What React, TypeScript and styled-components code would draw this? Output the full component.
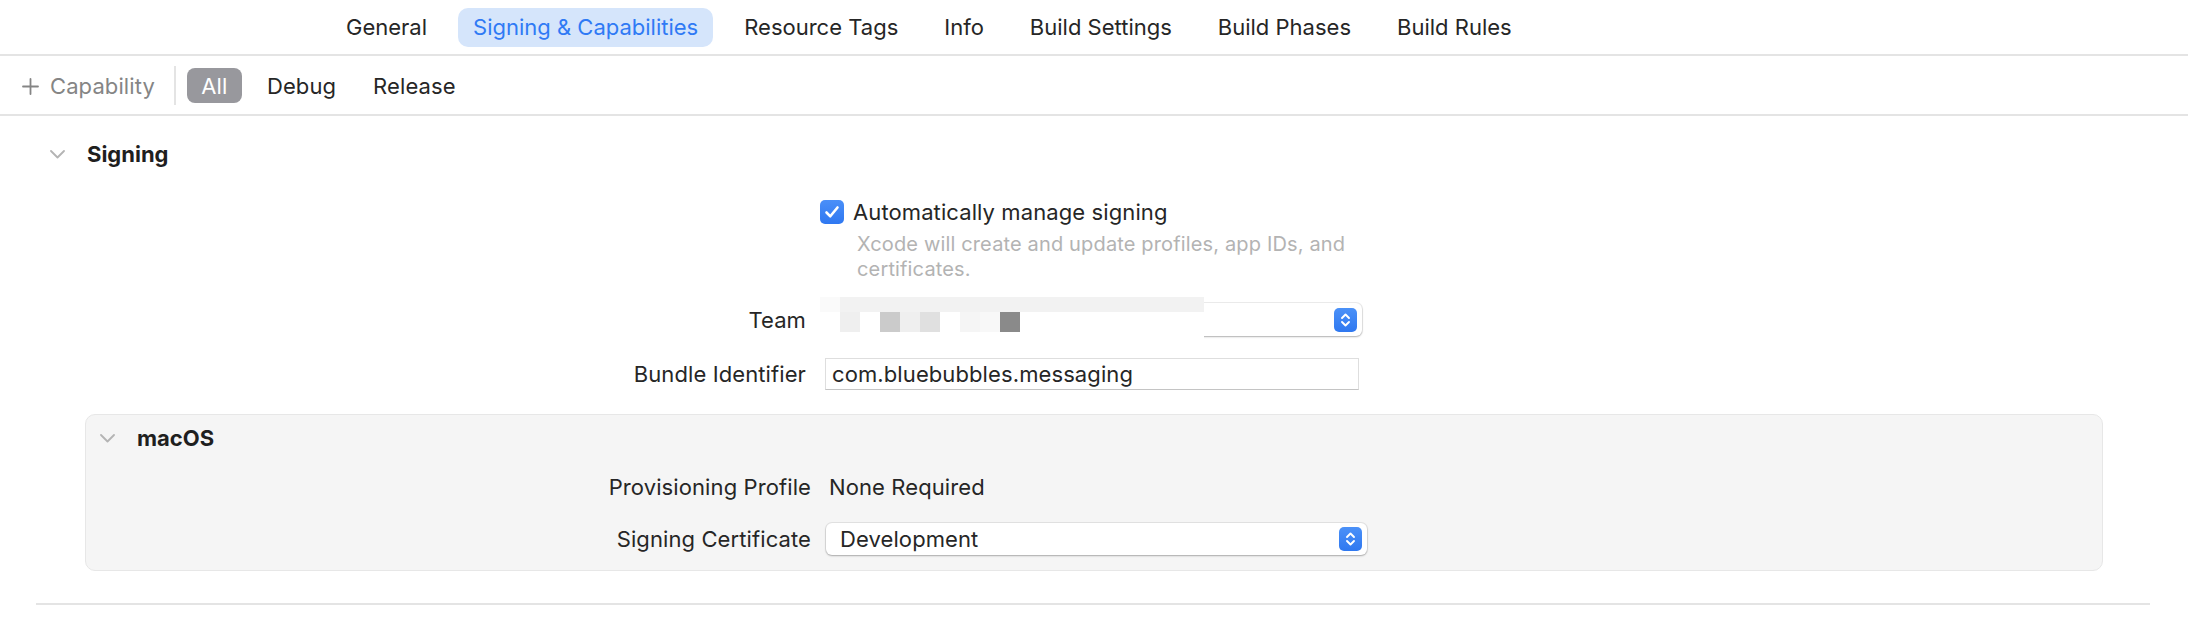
import React from 'react';
import styled, { createGlobalStyle } from 'styled-components';

const GlobalStyle = createGlobalStyle`
  html, body { margin: 0; padding: 0; background: #ffffff; }
  body {
    font-family: Inter, "Noto Sans", "Liberation Sans", sans-serif;
    color: #262626;
    -webkit-font-smoothing: antialiased;
  }
`;

const Page = styled.div`
  width: 2188px;
  height: 628px;
  overflow: hidden;
  background: #ffffff;
  display: flex;
  flex-direction: column;
  font-size: 22px;
  line-height: 26px;
  letter-spacing: 0.1px;
`;

const TabBar = styled.nav`
  height: 54px;
  border-bottom: 2px solid #e4e4e4;
  display: flex;
  align-items: center;
  gap: 16px;
  padding-left: 331px;
`;

const Tab = styled.div<{ $active?: boolean }>`
  height: 39px;
  padding: 0 15px;
  border-radius: 10px;
  display: flex;
  align-items: center;
  letter-spacing: 0;
  color: ${(p) => (p.$active ? '#2f7af5' : '#262626')};
  background: ${(p) => (p.$active ? '#d5e5fb' : 'transparent')};
`;

const Toolbar = styled.div`
  height: 58px;
  border-bottom: 2px solid #e4e4e4;
  display: flex;
  align-items: center;
  padding-left: 22px;
`;

const AddButton = styled.div`
  display: flex;
  align-items: center;
  gap: 11px;
  color: #858585;
  padding-top: 2px;
`;

const VSep = styled.div`
  width: 2px;
  height: 39px;
  background: #e4e4e4;
  margin: 0 11px 0 19px;
`;

const Segments = styled.div`
  display: flex;
  align-items: center;
  gap: 13px;
`;

const Segment = styled.div<{ $active?: boolean }>`
  height: 35px;
  min-width: 55px;
  padding: 2px 12px 0;
  box-sizing: border-box;
  border-radius: 8px;
  display: flex;
  align-items: center;
  justify-content: center;
  color: ${(p) => (p.$active ? '#ffffff' : '#262626')};
  background: ${(p) => (p.$active ? '#98989d' : 'transparent')};
`;

const Content = styled.div`
  padding: 18px 38px 0 36px;
  display: flex;
  flex-direction: column;
`;

const SectionHeader = styled.div`
  height: 40px;
  display: flex;
  align-items: center;
  gap: 22px;
  padding-left: 14px;
  font-weight: 700;
  letter-spacing: 0;
  color: #1f1f1f;
`;

const FieldRow = styled.div<{ $labelWidth: number; $gap: number; $top: number; $controlWidth: number }>`
  display: grid;
  grid-template-columns: ${(p) => p.$labelWidth}px ${(p) => p.$controlWidth}px;
  column-gap: ${(p) => p.$gap}px;
  align-items: center;
  margin-top: ${(p) => p.$top}px;
`;

const Label = styled.div`
  text-align: right;
  color: #262626;
  white-space: nowrap;
`;

const CheckRow = styled.label`
  display: flex;
  align-items: center;
  gap: 9px;
  margin-left: -2px;
  line-height: 24px;
  color: #262626;
`;

const CheckBox = styled.span`
  width: 24px;
  height: 24px;
  border-radius: 5px;
  background: linear-gradient(#4a8ff8, #2f78f1);
  display: flex;
  align-items: center;
  justify-content: center;
  flex: none;
`;

const Helper = styled.div`
  padding-left: 35px;
  font-size: 20px;
  line-height: 25px;
  letter-spacing: 0.15px;
  color: #b3b3b3;
`;

const Popup = styled.div<{ $height: number }>`
  position: relative;
  height: ${(p) => p.$height}px;
  box-sizing: border-box;
  background: #ffffff;
  border-radius: 6px;
  box-shadow: 0 0 0 1px rgba(0, 0, 0, 0.07), 0 1px 2px rgba(0, 0, 0, 0.25);
  display: flex;
  align-items: center;
  padding: 0 5px 0 14px;
  color: #262626;
`;

const Stepper = styled.span`
  margin-left: auto;
  width: 23px;
  height: 24px;
  border-radius: 5px;
  background: linear-gradient(#4b91f8, #2f78f0);
  display: flex;
  align-items: center;
  justify-content: center;
`;

const TextField = styled.div`
  height: 32px;
  box-sizing: border-box;
  margin: 0 3px;
  border: 1px solid #dedede;
  border-bottom-color: #c4c4c4;
  background: #ffffff;
  display: flex;
  align-items: center;
  padding-left: 6px;
  color: #262626;
`;

const Value = styled.div`
  padding-left: 3px;
  color: #262626;
`;

const Redaction = styled.div`
  position: absolute;
  left: -2px;
  top: -6px;
  width: 384px;
  height: 45px;
  background: #ffffff;
  display: flex;
  flex-direction: column;
`;

const CellRow = styled.div<{ $height: number }>`
  display: flex;
  height: ${(p) => p.$height}px;
`;

const Cell = styled.span<{ $bg: string; $grow?: boolean }>`
  width: 20px;
  flex: ${(p) => (p.$grow ? '1' : 'none')};
  background: ${(p) => p.$bg};
`;

const Panel = styled.div`
  margin: 24px 47px 0 49px;
  background: #f5f5f5;
  border: 1px solid #e7e7e7;
  border-radius: 10px;
  padding: 3px 0 15px 0;
  display: flex;
  flex-direction: column;
`;

const Divider = styled.div`
  margin-top: 32px;
  height: 2px;
  background: #e4e4e4;
`;

const Chevron = () => (
  <svg width="15" height="9" viewBox="0 0 15 9" fill="none">
    <path d="M1 1 L7.5 7.5 L14 1" stroke="#b4b4b4" strokeWidth="1.8" strokeLinecap="round" strokeLinejoin="round" />
  </svg>
);

const Plus = () => (
  <svg width="17" height="17" viewBox="0 0 17 17" fill="none">
    <path d="M8.5 1 V16 M1 8.5 H16" stroke="#858585" strokeWidth="1.8" strokeLinecap="round" />
  </svg>
);

const Check = () => (
  <svg width="16" height="14" viewBox="0 0 16 14" fill="none">
    <path d="M2.5 7.5 L6.3 11.3 L13.5 2.5" stroke="#ffffff" strokeWidth="2.6" strokeLinecap="round" strokeLinejoin="round" />
  </svg>
);

const Arrows = () => (
  <svg width="11" height="16" viewBox="0 0 11 16" fill="none">
    <path d="M2 6 L5.5 2.5 L9 6 M2 10 L5.5 13.5 L9 10" stroke="#ffffff" strokeWidth="1.9" strokeLinecap="round" strokeLinejoin="round" />
  </svg>
);

const tabs = ['General', 'Signing & Capabilities', 'Resource Tags', 'Info', 'Build Settings', 'Build Phases', 'Build Rules'];
const band = ['#fafafa', ...Array(18).fill('#f2f2f2')];
const blocks = ['#ffffff', '#efefef', '#ffffff', '#cbcbcb', '#efefef', '#e0e0e0', '#ffffff', '#f5f5f5', '#f8f8f8', '#8a8a8a'];

export default function App() {
  return (
    <Page>
      <GlobalStyle />
      <TabBar>
        {tabs.map((t) => (
          <Tab key={t} $active={t === 'Signing & Capabilities'}>
            {t}
          </Tab>
        ))}
      </TabBar>
      <Toolbar>
        <AddButton>
          <Plus />
          Capability
        </AddButton>
        <VSep />
        <Segments>
          <Segment $active>All</Segment>
          <Segment>Debug</Segment>
          <Segment>Release</Segment>
        </Segments>
      </Toolbar>
      <Content>
        <SectionHeader>
          <Chevron />
          Signing
        </SectionHeader>
        <FieldRow $labelWidth={770} $controlWidth={540} $gap={16} $top={26}>
          <span />
          <CheckRow>
            <CheckBox>
              <Check />
            </CheckBox>
            Automatically manage signing
          </CheckRow>
        </FieldRow>
        <FieldRow $labelWidth={770} $controlWidth={540} $gap={16} $top={8}>
          <span />
          <Helper>
            Xcode will create and update profiles, app IDs, and
            <br />
            certificates.
          </Helper>
        </FieldRow>
        <FieldRow $labelWidth={770} $controlWidth={540} $gap={16} $top={21}>
          <Label>Team</Label>
          <Popup $height={33}>
            <Stepper>
              <Arrows />
            </Stepper>
            <Redaction>
              <CellRow $height={15}>
                {band.map((c, i) => (
                  <Cell key={i} $bg={c} />
                ))}
                <Cell $bg="#f2f2f2" $grow />
              </CellRow>
              <CellRow $height={20}>
                {blocks.map((c, i) => (
                  <Cell key={i} $bg={c} />
                ))}
              </CellRow>
            </Redaction>
          </Popup>
        </FieldRow>
        <FieldRow $labelWidth={770} $controlWidth={540} $gap={16} $top={22}>
          <Label>Bundle Identifier</Label>
          <TextField>com.bluebubbles.messaging</TextField>
        </FieldRow>
        <Panel>
          <SectionHeader>
            <Chevron />
            macOS
          </SectionHeader>
          <FieldRow $labelWidth={725} $controlWidth={541} $gap={15} $top={16}>
            <Label>Provisioning Profile</Label>
            <Value>None Required</Value>
          </FieldRow>
          <FieldRow $labelWidth={725} $controlWidth={541} $gap={15} $top={23}>
            <Label>Signing Certificate</Label>
            <Popup $height={32}>
              Development
              <Stepper>
                <Arrows />
              </Stepper>
            </Popup>
          </FieldRow>
        </Panel>
        <Divider />
      </Content>
    </Page>
  );
}
